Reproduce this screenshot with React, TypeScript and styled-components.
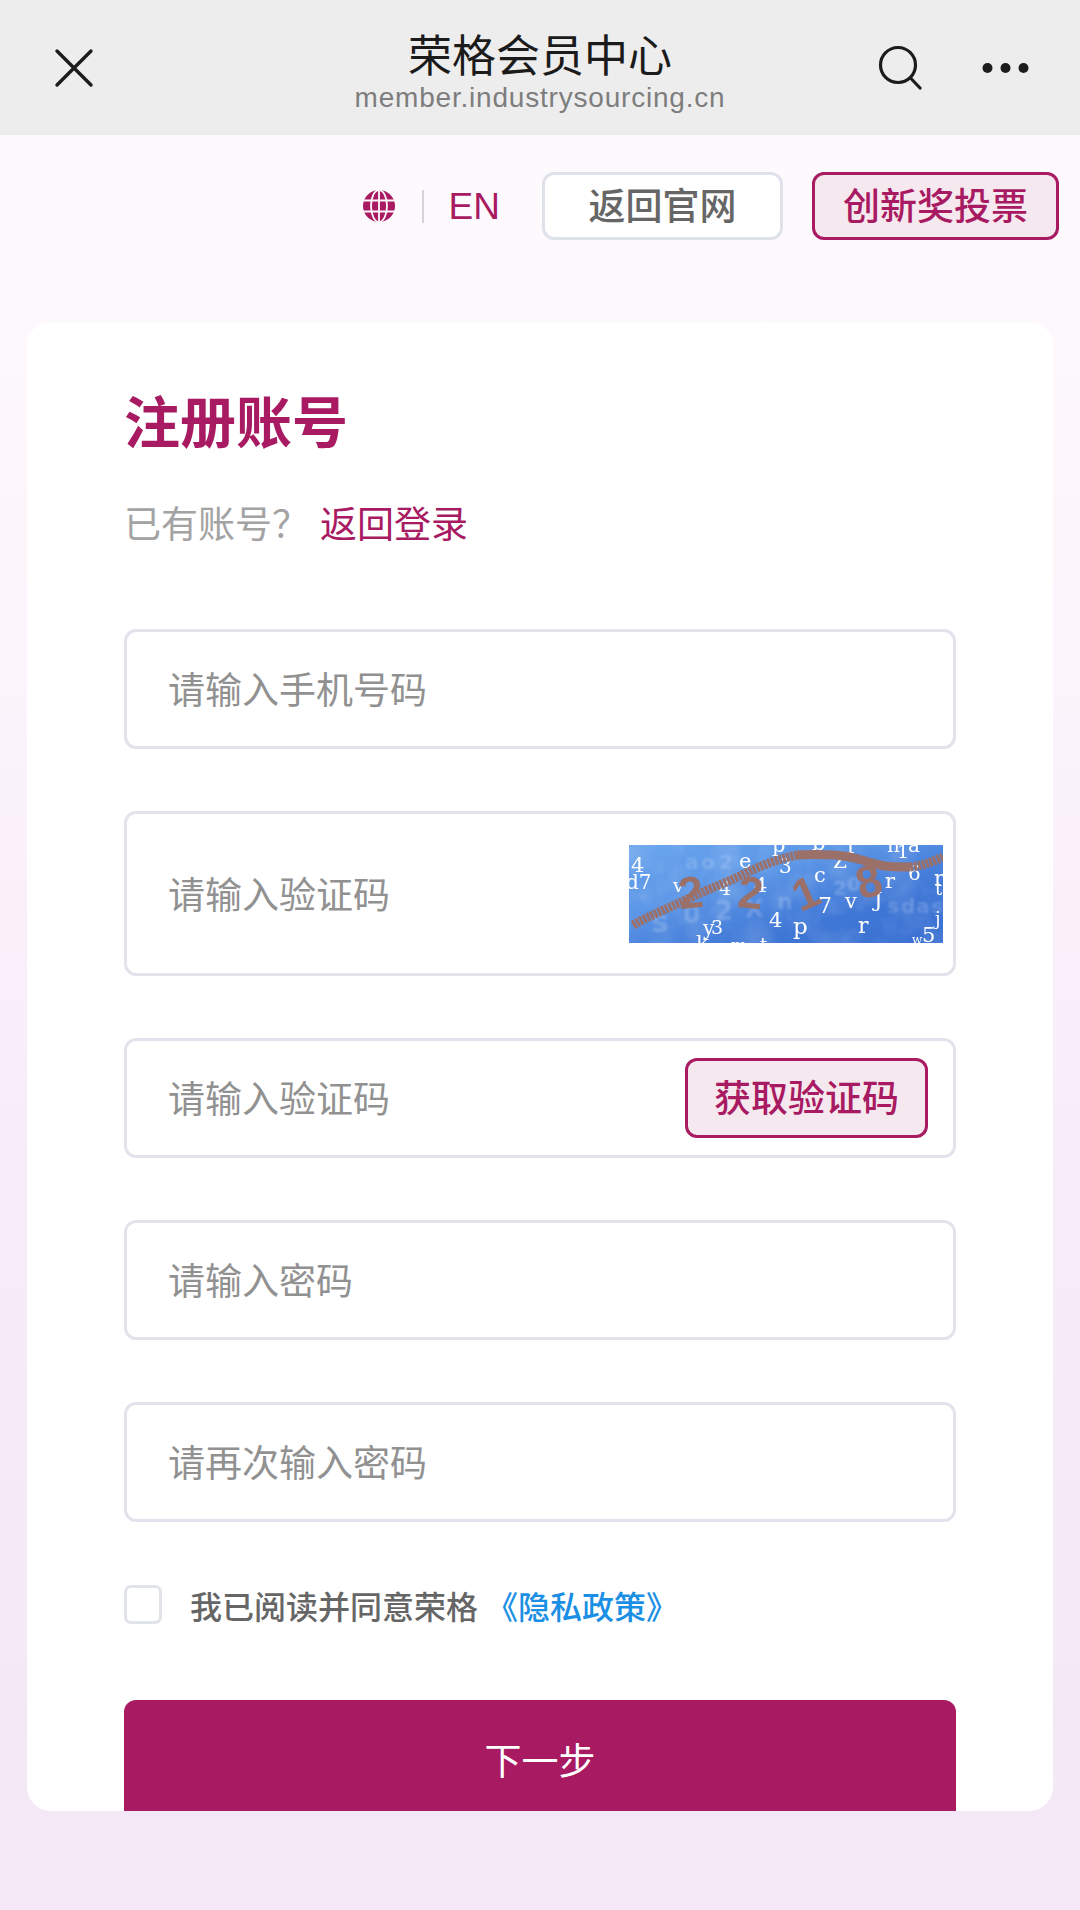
import React from 'react';
import styled, { createGlobalStyle } from 'styled-components';

const Global = createGlobalStyle`
  html, body { margin: 0; padding: 0; }
  body { font-family: "Noto Sans CJK SC", "Liberation Sans", sans-serif; }
  * { box-sizing: border-box; }
`;
const Page = styled.div`
  width: 1080px; height: 1910px; overflow: hidden;
  background: linear-gradient(180deg, #fdfafe 0, #fdfafe 135px, #fdf8fc 360px, #fbf4fb 700px, #f9edf9 1040px, #f5e8f6 1720px, #f6e9f7 1910px);
`;
const Header = styled.header`
  height: 135px; background: #ededed;
  display: grid; grid-template-columns: 1fr auto 1fr; align-items: center;
  padding: 0 51px 0 54px;
`;
const IconButton = styled.span`display: flex; align-items: center;`;
const HeaderRight = styled.div`display: flex; justify-content: flex-end; align-items: center; gap: 60px;`;
const TitleBlock = styled.div`display: flex; flex-direction: column; align-items: center; margin: 4px 3px 0 0;`;
const Title = styled.div`font-size: 44px; line-height: 56px; color: #1b1b1b; font-weight: 400;`;
const Url = styled.div`font-family: "Liberation Sans", sans-serif; font-size: 28px; line-height: 32px; letter-spacing: .8px; color: #7d7d7d; margin-top: 1px;`;
const Toolbar = styled.div`
  display: flex; justify-content: flex-end; align-items: center;
  padding: 37px 21px 0 0; height: 105px;
`;
const Lang = styled.span`
  font-family: "Liberation Sans", sans-serif; font-size: 37px; color: #a81a61; line-height: 68px; margin-top: 1px;
`;
const Divider = styled.span`width: 2px; height: 33px; background: #d5d5d8; margin: 0 25px 0 27px;`;
const TopButton = styled.button<{ $accent?: boolean }>`
  height: 68px; padding: 0 0 4px; margin-left: ${p => (p.$accent ? '29px' : '42px')};
  width: ${p => (p.$accent ? '247px' : '241px')};
  font: 500 37px/1 "Noto Sans CJK SC", sans-serif;
  border-radius: 12px;
  border: 3px solid ${p => (p.$accent ? '#a81a61' : '#dfe2ea')};
  background: ${p => (p.$accent ? '#f6e8ef' : '#ffffff')};
  color: ${p => (p.$accent ? '#a81a61' : '#666666')};
`;
const Card = styled.main`
  margin: 82px 27px 0; height: 1489px; background: #fff; border-radius: 24px;
  padding: 0 97px; overflow: hidden;
`;
const Heading = styled.h1`
  margin: 0; padding-top: 61px; font-size: 56px; line-height: 72px; font-weight: 700; color: #a81a61;
`;
const Sub = styled.div`margin-top: 42px; font-size: 37px; line-height: 50px; color: #a3a3a3; display: flex; gap: 11px;`;
const SubLink = styled.a`color: #a81a61;`;
const Form = styled.form`margin-top: 82px; display: flex; flex-direction: column; gap: 62px;`;
const Field = styled.div<{ $tall?: boolean }>`
  width: 832px; height: ${p => (p.$tall ? '165px' : '120px')};
  border: 3px solid #e2e3ec; border-radius: 12px;
  display: flex; align-items: center; padding: 0 10px 0 41px; background: #fff;
`;
const Input = styled.input`
  flex: 1; min-width: 0; border: 0; outline: 0; background: transparent;
  font: 400 37px/50px "Noto Sans CJK SC", sans-serif; color: #333; padding: 0 0 2px;
  &::placeholder { color: #919191; opacity: 1; }
`;
const CodeButton = styled.button`
  width: 243px; height: 80px; flex: none; padding: 0 0 3px;
  font: 500 37px/1 "Noto Sans CJK SC", sans-serif; color: #a81a61;
  background: #f6e8ef; border: 3px solid #a81a61; border-radius: 12px;
  margin-right: 15px;
`;
const Agree = styled.label`
  display: flex; align-items: center; margin-top: 63px; height: 39px; font-size: 32px; font-weight: 500; color: #666;
`;
const Check = styled.span`width: 38px; height: 39px; border: 3px solid #e0e3ea; border-radius: 7px; margin-right: 28px; background: #fff;`;
const Policy = styled.a`color: #1a8fe3; margin-left: 8px;`;
const Next = styled.button`
  display: block; width: 832px; height: 130px; margin-top: 76px; padding: 0 0 12px; border: 0; border-radius: 12px;
  background: #a81a61; color: #fff; font: 400 37px/1 "Noto Sans CJK SC", sans-serif;
`;
const CaptchaArt = styled.svg`flex: none; display: block;`;

const CloseIcon = () => (
  <svg width="40" height="40" viewBox="0 0 40 40" fill="none" stroke="#1c1c1c" strokeWidth="3.4" strokeLinecap="round"><path d="M3 3 37 37M37 3 3 37" /></svg>
);
const SearchIcon = () => (
  <svg width="44" height="46" viewBox="0 0 44 46" fill="none" stroke="#1c1c1c" strokeWidth="3.2" strokeLinecap="round"><circle cx="20" cy="20" r="17.5" /><path d="M32.5 33 42 43" /></svg>
);
const DotsIcon = () => (
  <svg width="47" height="12" viewBox="0 0 47 12" fill="#1c1c1c"><circle cx="5.5" cy="6" r="5" /><circle cx="23.5" cy="6" r="5" /><circle cx="41.5" cy="6" r="5" /></svg>
);
const GlobeIcon = () => (
  <svg width="32" height="32" viewBox="0 0 32 32"><circle cx="16" cy="16" r="16" fill="#a81a61" /><g fill="none" stroke="#fdf9fd" strokeWidth="1.8"><path d="M0 10.5H32M0 21.5H32M16 0V32" /><ellipse cx="16" cy="16" rx="8" ry="16" /></g></svg>
);

const chars: [string, number, number, number][] = [
  ['4', 2, 27, 21], ['d7', -3, 44, 20], ['v', 44, 47, 19], ['4', 90, 50, 19], ['e', 110, 23, 21], ['3', 150, 28, 20], ['4', 125, 47, 21],
  ['p', 143, 7, 21], ['4', 140, 82, 21], ['y', 74, 90, 20], ['3', 82, 89, 19], ['k', 67, 105, 21], ['m', 102, 106, 17], ['t', 131, 106, 18],
  ['b', 183, 5, 21], ['f', 218, 8, 21], ['Z', 204, 23, 20], ['c', 185, 37, 21], ['7', 189, 68, 22], ['v', 216, 63, 21],
  ['J', 245, 62, 21], ['r', 256, 43, 21], ['6', 279, 35, 20], ['n', 258, 7, 20], ['a', 279, 7, 20], ['1', 268, 13, 19],
  ['r', 305, 40, 21], ['t', 306, 50, 18], ['j', 306, 80, 18], ['p', 164, 89, 23], ['r', 229, 88, 22], ['5', 293, 97, 21], ['w', 283, 99, 12],
];
const faint: [string, number, number, number][] = [
  ['s', 22, 87, 30], ['0', 54, 78, 25], ['2', 86, 75, 26], ['X', 116, 72, 24], ['n', 148, 64, 22], ['2', 204, 50, 20], ['0', 218, 46, 20],
  ['a', 56, 24, 20], ['o', 72, 24, 20], ['2', 90, 24, 20], ['s', 258, 68, 20], ['d', 272, 68, 20], ['a', 287, 68, 20], ['s', 302, 68, 20],
];
const digits: [string, number, number, number][] = [
  ['2', 49, 63, -6], ['2', 109, 63, 6], ['1', 164, 64, -24], ['8', 227, 52, -16],
];

const Captcha = () => (
  <CaptchaArt width="314" height="98" viewBox="0 0 314 98">
    <defs>
      <linearGradient id="cap" x1="0" y1="0" x2="1" y2="1">
        <stop offset="0" stopColor="#6aa5ee" />
        <stop offset=".35" stopColor="#5c96e6" />
        <stop offset=".7" stopColor="#3f77d6" />
        <stop offset="1" stopColor="#3a70d2" />
      </linearGradient>
      <filter id="mottle" x="0" y="0" width="100%" height="100%">
        <feTurbulence type="fractalNoise" baseFrequency=".035" numOctaves="3" seed="4" />
        <feColorMatrix values="0 0 0 0 1  0 0 0 0 1  0 0 0 0 1  1.1 0 0 0 -.42" />
      </filter>
      <filter id="soft"><feGaussianBlur stdDeviation=".35" /></filter>
      <filter id="softer"><feGaussianBlur stdDeviation="1" /></filter>
    </defs>
    <rect width="314" height="98" fill="url(#cap)" />
    <rect width="314" height="98" filter="url(#mottle)" opacity=".25" />
    <g fill="#fff" opacity=".17" fontFamily="'DejaVu Sans', sans-serif" fontWeight="700" filter="url(#softer)">
      {faint.map(([c, x, y, s], i) => <text key={i} x={x} y={y} fontSize={s}>{c}</text>)}
    </g>
    <g fill="#fff" fontFamily="'DejaVu Serif', serif" filter="url(#soft)">
      {chars.map(([c, x, y, s], i) => <text key={i} x={x} y={y} fontSize={s}>{c}</text>)}
    </g>
    <g fill="none" stroke="#9a6f68" strokeWidth="9" filter="url(#soft)">
      <path strokeDasharray="3 1" d="M4 80C22 70 42 62 63 52S97 38 113 30 145 15 168 10" />
      <path d="M168 10C185 9 195 10 206 10 218 11 226 13 233 15 242 18 250 20 256 21 264 22 272 22 281 22" />
      <path strokeDasharray="3 1" d="M281 22C292 21 303 17 314 12" />
    </g>
    <g fill="#9a6f68" fontFamily="'Liberation Sans', sans-serif" fontSize="45" fontWeight="700" filter="url(#soft)">
      {digits.map(([c, x, y, r], i) => <text key={i} x={x} y={y} transform={`rotate(${r} ${x + 12} ${y - 16})`}>{c}</text>)}
    </g>
  </CaptchaArt>
);

export default function App() {
  return (
    <Page>
      <Global />
      <Header>
        <IconButton><CloseIcon /></IconButton>
        <TitleBlock>
          <Title>荣格会员中心</Title>
          <Url>member.industrysourcing.cn</Url>
        </TitleBlock>
        <HeaderRight>
          <IconButton><SearchIcon /></IconButton>
          <IconButton><DotsIcon /></IconButton>
        </HeaderRight>
      </Header>
      <Toolbar>
        <IconButton><GlobeIcon /></IconButton>
        <Divider />
        <Lang>EN</Lang>
        <TopButton type="button">返回官网</TopButton>
        <TopButton type="button" $accent>创新奖投票</TopButton>
      </Toolbar>
      <Card>
        <Heading>注册账号</Heading>
        <Sub>已有账号？<SubLink>返回登录</SubLink></Sub>
        <Form>
          <Field><Input placeholder="请输入手机号码" /></Field>
          <Field $tall><Input placeholder="请输入验证码" /><Captcha /></Field>
          <Field><Input placeholder="请输入验证码" /><CodeButton type="button">获取验证码</CodeButton></Field>
          <Field><Input placeholder="请输入密码" /></Field>
          <Field><Input placeholder="请再次输入密码" /></Field>
        </Form>
        <Agree><Check />我已阅读并同意荣格<Policy>《隐私政策》</Policy></Agree>
        <Next type="button">下一步</Next>
      </Card>
    </Page>
  );
}
